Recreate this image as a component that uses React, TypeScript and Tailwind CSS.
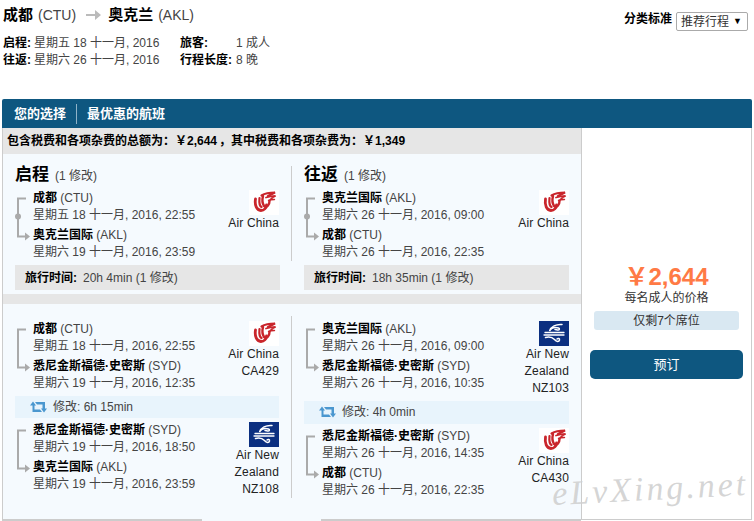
const BAR = "#0e5780";

type Stop = { name: string; code: string; time: string };

const AirChinaLogo = () => (
  <div className="flex h-[25px] w-[30px] items-center justify-center bg-white">
    <svg viewBox="0 0 30 25" className="h-[25px] w-[30px]" fill="none" stroke="#c9252b" strokeLinecap="round">
      <path d="M6.5 9c-1 6 1 11 5.5 11.5 3 0 5.500-2.500 5.500-5.500" strokeWidth="2.8" />
      <path d="M10.500 8c-.5 5 0 8 2 9" strokeWidth="2.200" />
      <path d="M14 6c-1 4-1 7 1 10 3 2 5.500-1 5.500-5" strokeWidth="2.400" />
      <path d="M12.500 5.500c4-2.500 8-3 13.500-3-3 1.500-5 2.500-7 3.500" strokeWidth="2.200" />
      <path d="M17 7.500c3-1 6-1.500 9.500-1.500-2 1-4 2-5 3.500" strokeWidth="1.800" />
      <path d="M19.500 10.500c2-1 4-1 6-1" strokeWidth="1.400" />
    </svg>
  </div>
);

const AirNzLogo = () => (
  <svg viewBox="0 0 30 25" className="h-[25px] w-[30px] bg-[#0b2f80]" fill="none" stroke="#fff" strokeLinecap="round">
    <path d="M23 3.500c-6-.5-11 2-12.500 6.500 1.500-2.500 5-4 9-3 1.500.5 1 2-.5 2-1 0-2-.5-3-.5" strokeWidth="1.500" />
    <path d="M6 11.500h19" strokeWidth="1.300" />
    <path d="M5 14h20" strokeWidth="1.300" />
    <path d="M6.500 16.500c4-1 7 0 9 2 2 2.500 4.500 2.500 5 .5.300-1.500-1.500-2-2.500-1" strokeWidth="1.500" />
  </svg>
);

const Bracket = ({ dot }: { dot?: boolean }) => (
  <svg viewBox="0 0 18 70" className="h-[70px] w-[18px] shrink-0" fill="none">
    <path d="M11 8.500H3V46.500H11" stroke="#aaa" strokeWidth="2" />
    <path d="M10 42.500l5 4-5 4z" fill="#aaa" />
    {dot && <circle cx="3" cy="26.500" r="3" fill="#aaa" />}
  </svg>
);

const RepeatIcon = () => (
  <svg viewBox="0 0 17 12" className="h-3 w-[17px]" fill="#4a97cf">
    <path d="M0 4.500L3 .5l3 4H4.500V8.500H10l2 2.500H2.500V4.500z" />
    <path d="M17 7.500L14 11.500l-3-4h1.500V3.500H7L5 1h10v6.500z" />
  </svg>
);

function Stops({ from, to, dot }: { from: Stop; to: Stop; dot?: boolean }) {
  return (
    <div className="flex">
      <Bracket dot={dot} />
      <div className="text-[12px] leading-[17px] text-[#444]">
        <div><b className="text-black">{from.name}</b> {from.code}</div>
        <div>{from.time}</div>
        <div className="mt-[3px]"><b className="text-black">{to.name}</b> {to.code}</div>
        <div>{to.time}</div>
      </div>
    </div>
  );
}

function Flight({ from, to, air, labels }: { from: Stop; to: Stop; air: "ca" | "nz"; labels: string[] }) {
  return (
    <div className="flex justify-between">
      <Stops from={from} to={to} />
      <div className="flex flex-col items-end text-right text-[12px] leading-[17px] tracking-[0.15px] text-[#222]">
        {air === "ca" ? <AirChinaLogo /> : <AirNzLogo />}
        {labels.map((l) => (
          <div key={l}>{l}</div>
        ))}
      </div>
    </div>
  );
}

const Layover = ({ text }: { text: string }) => (
  <div className="flex h-[23px] items-center gap-[6px] bg-[#e8f4fc] pb-px pl-[15px] text-[12px] text-[#444]">
    <RepeatIcon />
    <span>{text}</span>
  </div>
);

function Summary({ title, from, to, extra }: { title: string; from: Stop; to: Stop; extra: string }) {
  return (
    <>
      <div className="h-[22px] leading-[18px] text-[#444]">
        <b className="text-[17px] text-black">{title}</b>
        <span className="ml-[6px] text-[12px]">{extra}</span>
      </div>
      <div className="mt-[2px] flex justify-between">
        <Stops from={from} to={to} dot />
        <div className="flex flex-col items-end text-[12px] leading-[17px] tracking-[0.15px] text-[#222]">
          <AirChinaLogo />
          <div>Air China</div>
        </div>
      </div>
    </>
  );
}

const TimeBar = ({ time }: { time: string }) => (
  <div className="mt-1 flex h-[25px] items-center bg-[#e6e6e6] pl-[10px] text-[12px] text-[#444]">
    <b className="mr-[6px] text-black">旅行时间:</b>
    {time}
  </div>
);

const CTU = "(CTU)";
const AKL = "(AKL)";
const SYD = "(SYD)";

export default function App() {
  return (
    <div className="relative h-[521px] w-[754px] overflow-hidden bg-white font-['Liberation_Sans','Noto_Sans_CJK_SC',sans-serif]">
      {/* header */}
      <div className="flex h-[99px] justify-between">
        <div className="pl-[3px] pt-[5px]">
          <div className="flex h-[20px] items-center text-[14px] text-[#444]">
            <b className="text-[15px] text-black">成都</b>
            <span className="ml-[5px]">(CTU)</span>
            <svg viewBox="0 0 15 10" className="ml-[10px] mr-[7px] h-[10px] w-[15px]" fill="#bbb">
              <path d="M0 4h9V0l6 5-6 5V6H0z" />
            </svg>
            <b className="text-[15px] text-black">奥克兰</b>
            <span className="ml-[5px]">(AKL)</span>
          </div>
          <div className="mt-[10px] grid grid-cols-[177px_auto] text-[12px] leading-[17px] text-[#444]">
            <div><b className="mr-[3px] text-black">启程:</b>星期五 18 十一月, 2016</div>
            <div className="flex"><b className="w-[56px] text-black">旅客:</b>1 成人</div>
            <div><b className="mr-[3px] text-black">往返:</b>星期六 26 十一月, 2016</div>
            <div className="flex"><b className="w-[56px] text-black">行程长度:</b>8 晚</div>
          </div>
        </div>
        <div className="flex items-start gap-[4px] pr-[6px] pt-[11px]">
          <b className="text-[12px] leading-[17px] text-black">分类标准</b>
          <div className="mt-px flex h-[19px] w-[72px] items-center justify-between rounded-[2px] border border-[#aaa] pl-[4px] pr-[5px] text-[12px] text-[#333]">
            <span>推荐行程</span>
            <span className="text-[9px] text-black">▼</span>
          </div>
        </div>
      </div>

      {/* title bar */}
      <div className="ml-[2px] flex h-[29px] w-[750px] items-center rounded-t-[2px] bg-[#0e5780] pl-3 text-[13px] font-bold text-white" style={{ backgroundColor: BAR }}>
        <span>您的选择</span>
        <span className="mx-[10px] h-5 w-px bg-[#8fb3c9]" />
        <span>最优惠的航班</span>
      </div>

      <div className="ml-[2px] flex h-[392px] w-[750px]">
        <div className="h-[393px] w-[579px] border-l border-[#ccc] bg-[#f5fafe]">
          <div className="flex h-[26px] items-center bg-[#e6e6e6] pl-1 text-[12px] font-bold text-black">
            包含税费和各项杂费的总额为：￥2,644<span className="ml-[2px]">，</span>其中税费和各项杂费为：￥1,349
          </div>

          {/* totals */}
          <div className="flex h-[140px] pt-3">
            <div className="w-[289px] pl-3">
              <div className="border-r border-[#ccc] pr-3">
                <Summary
                  title="启程"
                  extra="(1 修改)"
                  from={{ name: "成都", code: CTU, time: "星期五 18 十一月, 2016, 22:55" }}
                  to={{ name: "奥克兰国际", code: AKL, time: "星期六 19 十一月, 2016, 23:59" }}
                />
              </div>
              <div className="mr-3">
                <TimeBar time="20h 4min (1 修改)" />
              </div>
            </div>
            <div className="flex-1 px-3">
              <Summary
                title="往返"
                extra="(1 修改)"
                from={{ name: "奥克兰国际", code: AKL, time: "星期六 26 十一月, 2016, 09:00" }}
                to={{ name: "成都", code: CTU, time: "星期六 26 十一月, 2016, 22:35" }}
              />
              <TimeBar time="18h 35min (1 修改)" />
            </div>
          </div>

          <div className="h-[10px] bg-[#e6e6e6]" />

          {/* flight details */}
          <div className="flex h-[215px] pt-3">
            <div className="w-[289px] pl-3">
              <div className="flex h-[182px] flex-col gap-1 border-r border-[#ccc] pr-3 pt-[5px]">
                <Flight
                  air="ca"
                  labels={["Air China", "CA429"]}
                  from={{ name: "成都", code: CTU, time: "星期五 18 十一月, 2016, 22:55" }}
                  to={{ name: "悉尼金斯福德·史密斯", code: SYD, time: "星期六 19 十一月, 2016, 12:35" }}
                />
                <Layover text="修改: 6h 15min" />
                <Flight
                  air="nz"
                  labels={["Air New", "Zealand", "NZ108"]}
                  from={{ name: "悉尼金斯福德·史密斯", code: SYD, time: "星期六 19 十一月, 2016, 18:50" }}
                  to={{ name: "奥克兰国际", code: AKL, time: "星期六 19 十一月, 2016, 23:59" }}
                />
              </div>
            </div>
            <div className="flex flex-1 flex-col gap-1 px-3 pt-[5px]">
              <Flight
                air="nz"
                labels={["Air New", "Zealand", "NZ103"]}
                from={{ name: "奥克兰国际", code: AKL, time: "星期六 26 十一月, 2016, 09:00" }}
                to={{ name: "悉尼金斯福德·史密斯", code: SYD, time: "星期六 26 十一月, 2016, 10:35" }}
              />
              <Layover text="修改: 4h 0min" />
              <Flight
                air="ca"
                labels={["Air China", "CA430"]}
                from={{ name: "悉尼金斯福德·史密斯", code: SYD, time: "星期六 26 十一月, 2016, 14:35" }}
                to={{ name: "成都", code: CTU, time: "星期六 26 十一月, 2016, 22:35" }}
              />
            </div>
          </div>

          <div className="flex justify-between">
            <div className="h-[2px] w-[199px] bg-[#ccc]" />
            <div className="h-[2px] w-[260px] bg-[#ccc]" />
          </div>
        </div>

        {/* price */}
        <div className="flex w-[171px] flex-col border-x border-b border-[#ccc] px-2 pt-[136px]">
          <div className="text-center text-[24px] font-bold leading-[26px] text-[#ff7a45]">￥2,644</div>
          <div className="text-center text-[12px] leading-[16px] text-[#333]">每名成人的价格</div>
          <div className="mx-1 mt-[5px] flex h-[19px] items-center justify-center rounded-[3px] bg-[#d9e8f2] text-[12px] text-[#333]">
            仅剩7个席位
          </div>
          <div className="mt-5 flex h-[29px] items-center justify-center rounded-[5px] bg-[#0e5780] text-[13px] text-white">
            预订
          </div>
        </div>
      </div>

      {/* watermark */}
      <div className="pointer-events-none absolute left-[552px] top-[470px] -rotate-3 font-['Liberation_Serif',serif] text-[34px] italic leading-[38px] tracking-[3px] text-[#d0d0d0]/90">
        eLvXing.net
      </div>
    </div>
  );
}
